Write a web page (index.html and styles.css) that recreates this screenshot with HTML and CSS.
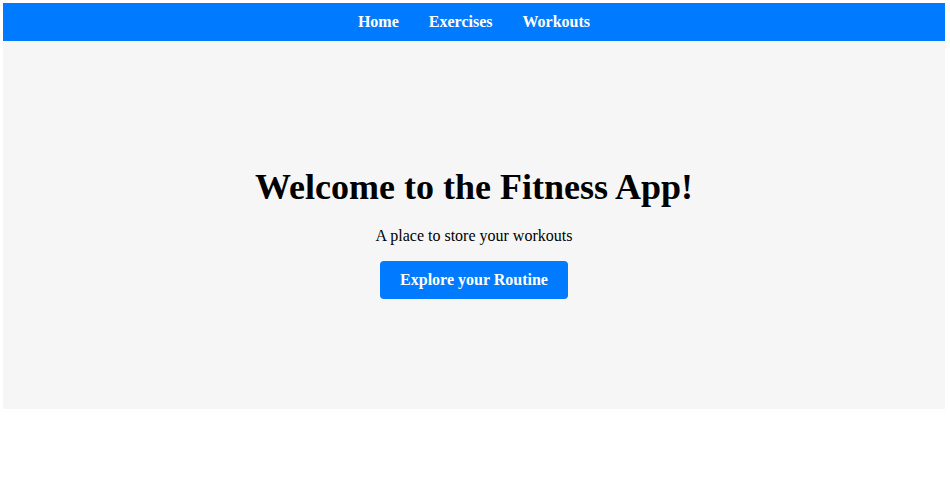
FILE: index.html
```html
<!DOCTYPE html>
<html>
<head>
<meta charset="utf-8">
<link rel="stylesheet" href="styles.css">
</head>
<body>
<nav class="nav">
  <a href="#" class="nav-link">Home</a>
  <a href="#" class="nav-link">Exercises</a>
  <a href="#" class="nav-link">Workouts</a>
</nav>
<section class="hero">
  <h1 class="hero-title">Welcome to the Fitness App!</h1>
  <p class="hero-sub">A place to store your workouts</p>
  <a href="#" class="hero-btn">Explore your Routine</a>
</section>
</body>
</html>
```
FILE: styles.css
```css
body {
  margin: 3px 5px 3px 3px;
  font-family: "Liberation Serif", "Times New Roman", serif;
  background: #fff;
}
.nav {
  background: #007bff;
  height: 38px;
  display: flex;
  justify-content: center;
  align-items: center;
  gap: 30px;
}
.nav-link {
  color: #fff;
  font-weight: bold;
  font-size: 16px;
  text-decoration: none;
}
.hero {
  background: #f6f6f6;
  height: 368px;
  display: flex;
  flex-direction: column;
  align-items: center;
  justify-content: center;
  box-sizing: border-box;
  padding-top: 15px;
}
.hero-title {
  font-size: 36px;
  margin: 0 0 19px;
}
.hero-sub {
  font-size: 16px;
  margin: 0 0 16px;
}
.hero-btn {
  background: #007bff;
  color: #fff;
  font-weight: bold;
  font-size: 16px;
  text-decoration: none;
  padding: 10px 20px;
  border-radius: 4px;
}
```
